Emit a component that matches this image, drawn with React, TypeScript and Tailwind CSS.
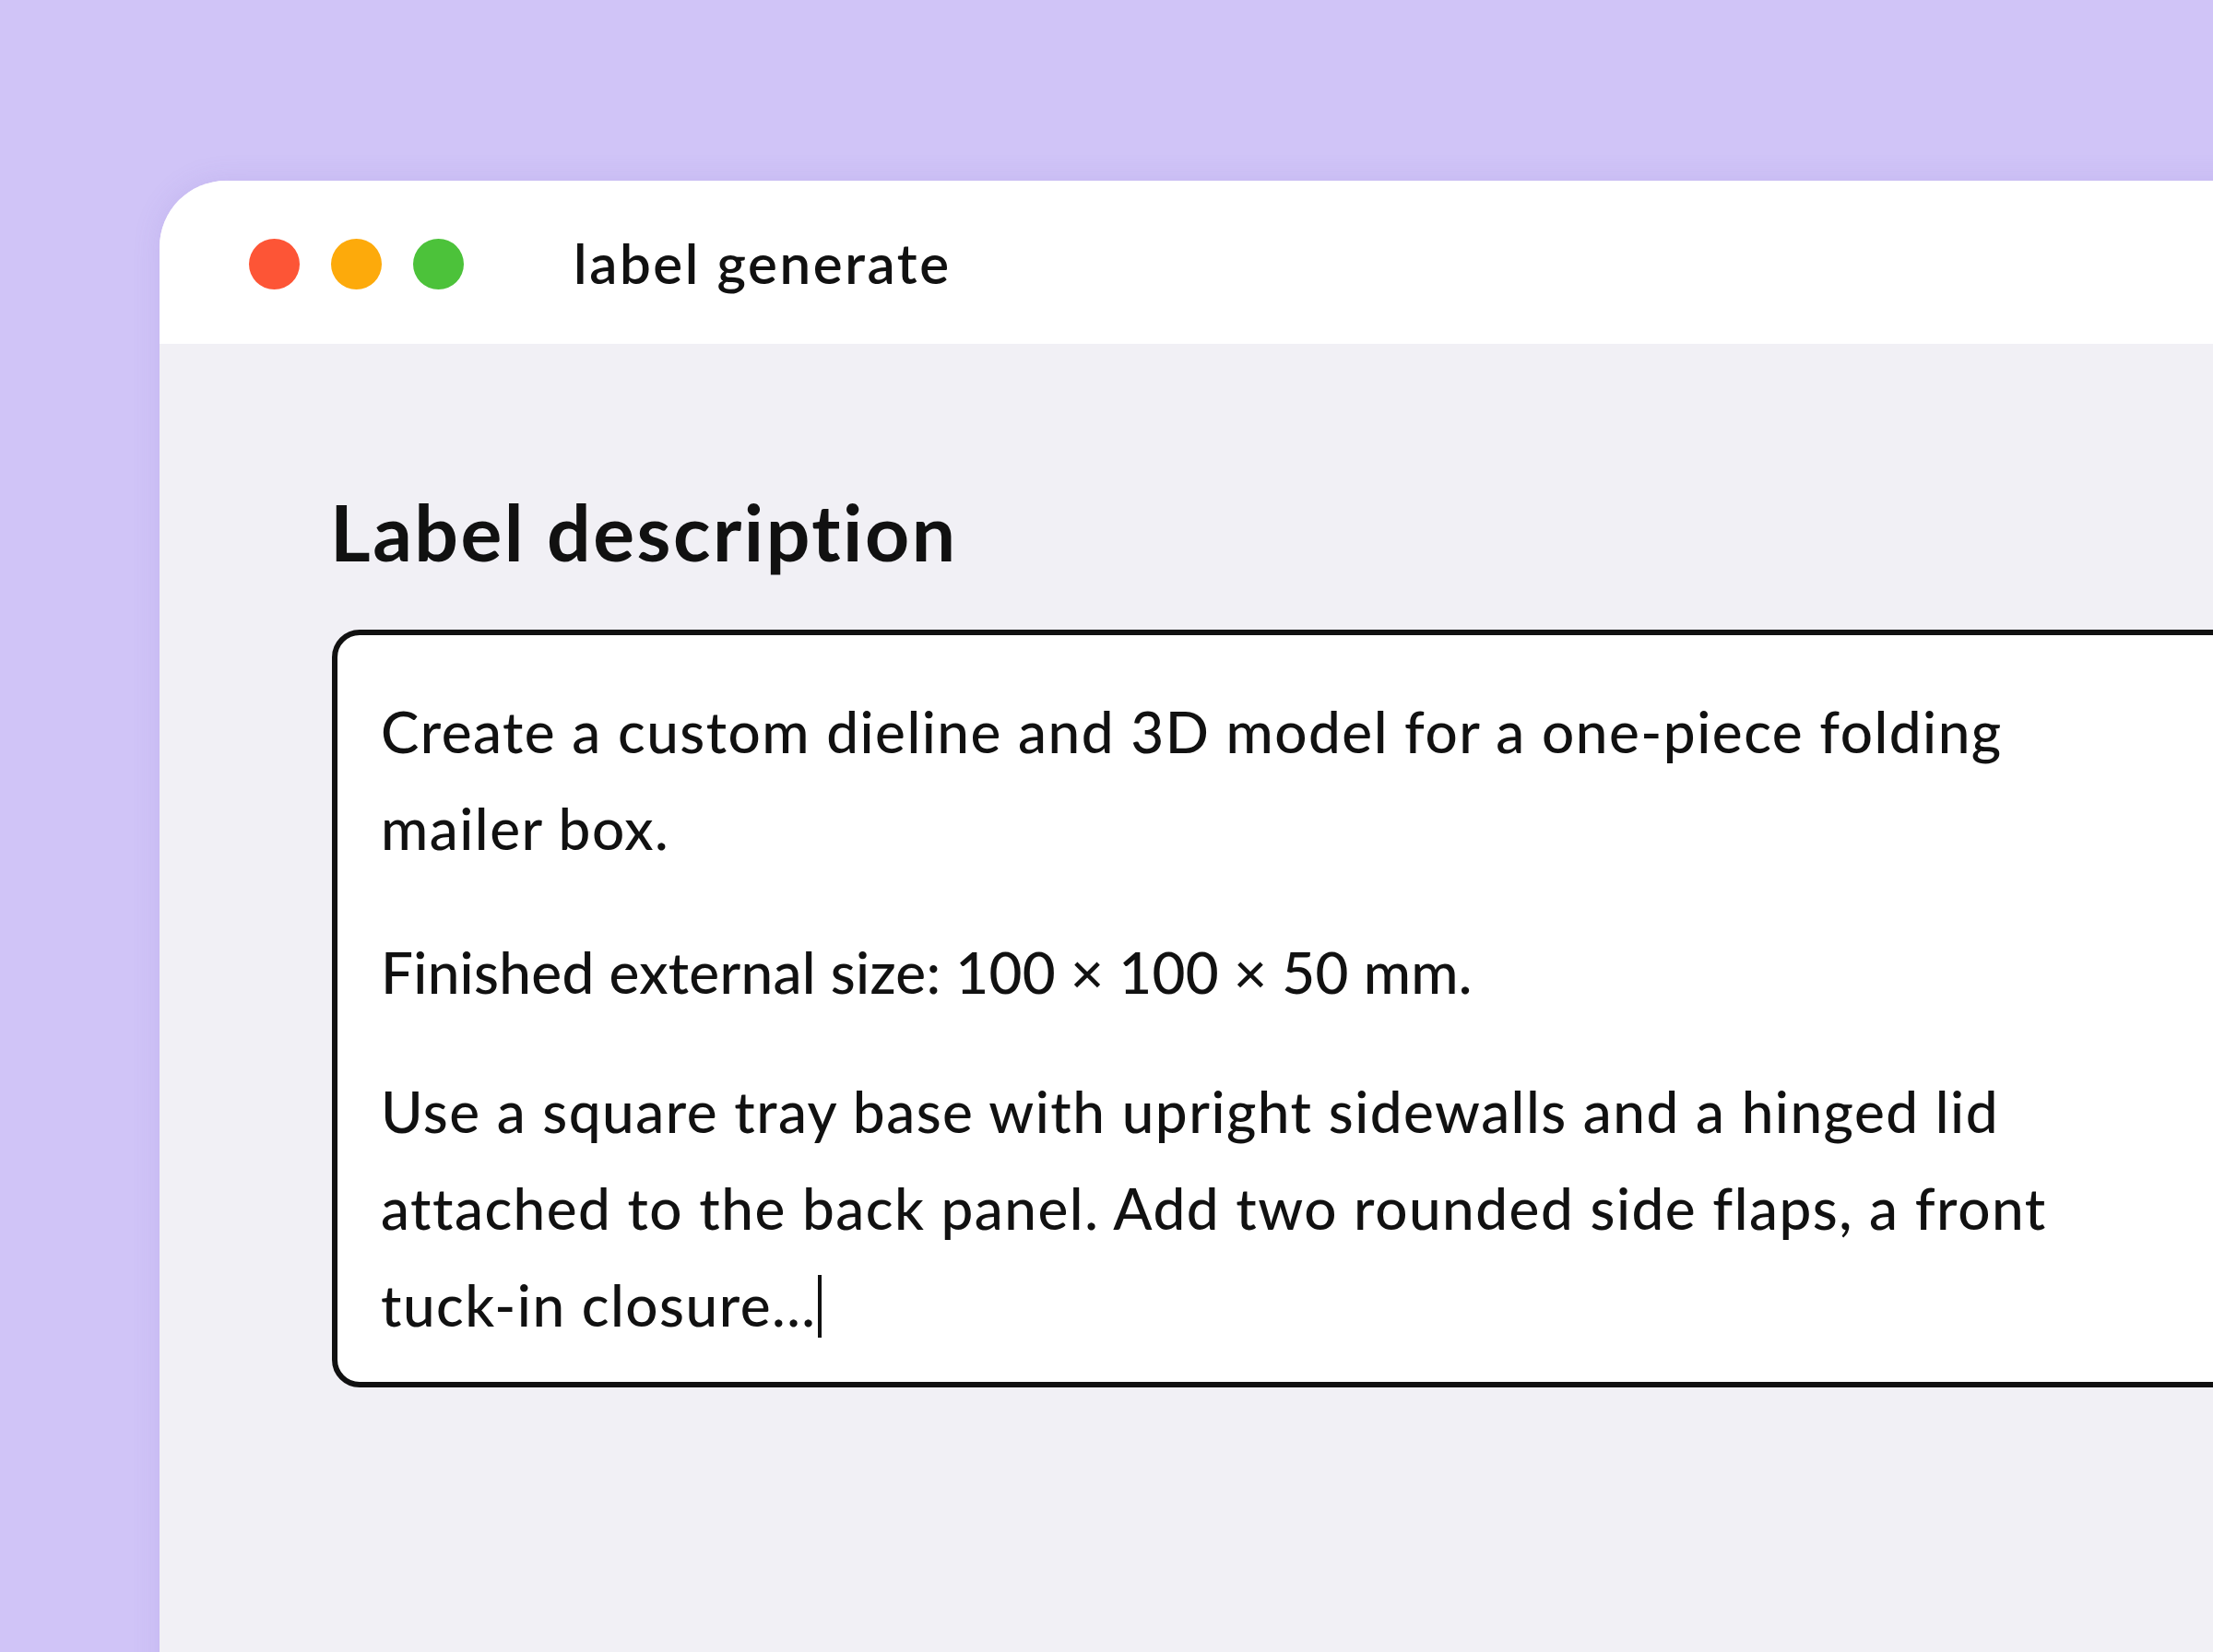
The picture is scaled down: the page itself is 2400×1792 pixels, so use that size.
export default function App() {
  return (
    <div
      className="w-[2400px] h-[1792px] overflow-hidden bg-[#d0c4f7] pl-[173px] pt-[196px]"
      style={{ fontFamily: 'Lato, "Noto Sans", sans-serif' }}
    >
      <div className="w-[2400px] h-[1700px] rounded-tl-[72px] overflow-hidden bg-[#f1f0f5] shadow-[0_0_30px_rgba(120,100,200,0.15)]">
        <div className="h-[177px] bg-white flex items-center pl-[97px]">
          <div className="flex gap-[34px] mt-[4px]">
            <span className="w-[55px] h-[55px] rounded-full bg-[#fd5536]" />
            <span className="w-[55px] h-[55px] rounded-full bg-[#fdaa0b]" />
            <span className="w-[55px] h-[55px] rounded-full bg-[#4cc23a]" />
          </div>
          <h1 className="ml-[119px] text-[60px] font-semibold text-[#111] leading-none tracking-[2.6px]">label generate</h1>
        </div>

        <div className="pl-[185px] pt-[162px]">
          <h2 className="text-[84px] font-bold text-[#111] leading-none tracking-[2.5px]">Label description</h2>

          <div className="mt-[64px] ml-[2px] w-[2300px] h-[822px] bg-white border-[6px] border-[#111] rounded-[30px] pl-[47px] pt-[52px] text-[62px] text-[#111] leading-[105px] font-medium tracking-[1.5px]">
            <p className="whitespace-nowrap">
              Create a custom dieline and 3D model for a one-piece folding
              <br />
              mailer box.
            </p>
            <p className="mt-[51px] whitespace-nowrap tracking-[0.3px]">Finished external size: 100 × 100 × 50 mm.</p>
            <p className="mt-[46px] whitespace-nowrap">
              Use a square tray base with upright sidewalls and a hinged lid
              <br />
              attached to the back panel. Add two rounded side flaps, a front
              <br />
              tuck-in closure...
              <span className="inline-block w-[4px] h-[68px] bg-[#111] align-[-12px] ml-[2px]" />
            </p>
          </div>
        </div>
      </div>
    </div>
  )
}
